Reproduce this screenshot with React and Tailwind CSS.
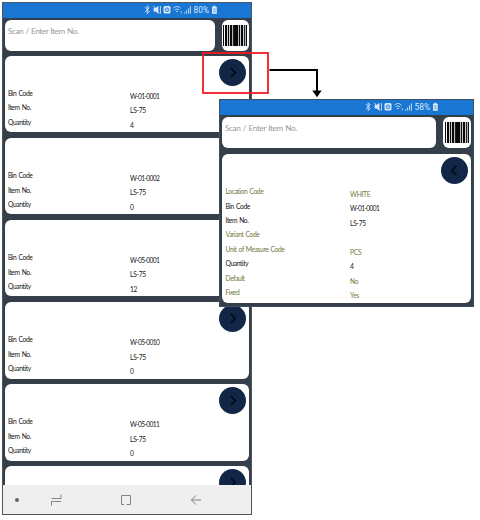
const bins = [
  ["W-01-0001", "LS-75", "4"],
  ["W-01-0002", "LS-75", "0"],
  ["W-05-0001", "LS-75", "12"],
  ["W-05-0010", "LS-75", "0"],
  ["W-05-0011", "LS-75", "0"],
];

const details = [
  ["Location Code", "WHITE", true],
  ["Bin Code", "W-01-0001", false],
  ["Item No.", "LS-75", false],
  ["Variant Code", "", true],
  ["Unit of Measure Code", "PCS", true],
  ["Quantity", "4", false],
  ["Default", "No", true],
  ["Fixed", "Yes", true],
];

function StatusIcons({ percent }) {
  return (
    <svg className="block h-[14px] w-[76px]" viewBox="0 0 76 14" fill="none" stroke="#d6e8fa" strokeWidth="0.9">
      <path d="M1 4.2 5.2 8.6 3.2 10.6V2.8L5.2 4.8 1 9.2" />
      <path d="M9.6 5h1.8l3-2v7.6l-3-2.2H9.6z" fill="#d6e8fa" stroke="none" />
      <path d="M9.6 3l5.4 7.6M16.4 3v7.6" />
      <rect x="19.5" y="3" width="7" height="7.6" rx="1.6" fill="#d6e8fa" stroke="none" />
      <circle cx="23" cy="6.8" r="1.9" stroke="#1976d2" strokeWidth="0.8" />
      <path d="M23 5.6v1.4h1" stroke="#1976d2" strokeWidth="0.6" />
      <path d="M29.3 5.2q3.7-3.4 7.4 0M30.6 7q2.4-2.2 4.8 0M32 8.7q1-.8 2 0" strokeWidth="0.8" />
      <path d="M37.2 8v2.6" strokeWidth="0.7" />
      <path d="M40.6 10.6V9.2M42.6 10.6V7.4M44.6 10.6V5.4M46.4 10.6V3.4" strokeWidth="0.9" />
      <text x="49.6" y="10.4" fill="#d6e8fa" stroke="none" textLength="15.4" lengthAdjust="spacingAndGlyphs" className="font-['Roboto',sans-serif] text-[9.4px]">
        {percent}
      </text>
      <path d="M69.3 2.8h2.2v1h1.3v7h-4.8v-7h1.3z" fill="#d6e8fa" stroke="none" />
      <path d="M69 6.2h2.8M69 8.3h2.8" stroke="#1976d2" strokeWidth="0.6" />
    </svg>
  );
}

function Barcode() {
  return (
    <svg className="block h-[21px] w-6" viewBox="0 0 24 21" fill="#080808">
      <path d="M0 0h1v21H0zM2 0h2.2v21H2zM5 0h1v21H5zM6.8 0h2.5v21H6.8zM10.1 0h5.2v21h-5.2zM16 0h1v21h-1zM17.8 0h2.4v21h-2.4zM21 0h.9v21H21zM22.7 0H24v21h-1.3z" />
    </svg>
  );
}

function RoundButton({ back = false }) {
  return (
    <div className="flex size-[27px] shrink-0 items-center justify-center rounded-full bg-[#122748]">
      <svg className="size-[13px]" viewBox="0 0 13 13" fill="none" stroke="#050a12" strokeWidth="1.8">
        {back ? <path d="M8.4 1.8 4 6.5 8.4 11.2" /> : <path d="M4.8 1.8 9.2 6.5 4.8 11.2" />}
      </svg>
    </div>
  );
}

function SearchRow({ wide = false }) {
  return (
    <div className="flex justify-between">
      <div className={`flex h-[30.5px] items-start rounded-[6px] bg-white pl-[3px] pt-[6px] ${wide ? "w-[214px]" : "w-[210px]"}`}>
        <span className={`whitespace-nowrap text-[8.2px] leading-[11px] [word-spacing:0.7px] text-[#999] ${wide ? "tracking-[-0.38px]" : "tracking-[-0.45px]"}`}>Scan / Enter Item No.</span>
      </div>
      <div className={`flex h-[30.5px] items-center justify-center rounded-[6px] bg-white ${wide ? "w-[28px]" : "w-[27.5px]"}`}>
        <Barcode />
      </div>
    </div>
  );
}

function Field({ label, value, muted = false, wide = false }) {
  return (
    <div className={`flex h-[14.45px] whitespace-nowrap text-[6.7px] leading-[14.45px] ${muted ? "text-[#74773f]" : "text-[#161616]"}`}>
      <span className={`tracking-[-0.4px] [word-spacing:0.8px] ${wide ? "w-[124.5px]" : "w-[122px]"}`}>{label}</span>
      <span className={`pt-[2.8px] ${value.length > 5 ? "text-[6.6px] tracking-[-0.6px]" : "tracking-[-0.3px]"}`}>{value}</span>
    </div>
  );
}

function CardShell({ children }) {
  return (
    <div className="h-[76.3px] shrink-0 rounded-[6px] bg-white pl-[3px] pt-[3px]">
      <div className="flex justify-end pr-[3.5px]">
        <RoundButton />
      </div>
      {children}
    </div>
  );
}

function BinCard({ bin }) {
  return (
    <CardShell>
      <Field label="Bin Code" value={bin[0]} />
      <Field label="Item No." value={bin[1]} />
      <Field label="Quantity" value={bin[2]} />
    </CardShell>
  );
}

function ListPhone() {
  return (
    <div className="ml-[2px] mt-[2px] flex h-[513px] w-[250px] flex-col border border-[#4b5661] bg-[#353f49]">
      <div className="flex h-[15px] shrink-0 justify-end bg-[#1976d2] pr-[31.5px]">
        <StatusIcons percent="80%" />
      </div>
      <div className="flex h-[467px] shrink-0 flex-col overflow-hidden px-[2px] pt-[2px]">
        <SearchRow />
        <div className="mt-[5.5px] flex flex-col gap-[5.8px]">
          {bins.map((bin) => <BinCard key={bin[0]} bin={bin} />)}
          <CardShell />
        </div>
      </div>
      <div className="flex flex-1 items-center bg-[#efefef]">
        <svg className="h-7 w-full" viewBox="0 0 248 28" fill="none" stroke="#777" strokeWidth="0.9">
          <circle cx="14" cy="14" r="2" fill="#666" stroke="none" />
          <path d="M48.5 12.5h9.5V8.5M58 15.5H48.5V19.5" />
          <path d="M121 18.5h-2.5v-9h9v9H123.5" />
          <path d="M198 14h-9.5M193 9.4 188.4 14l4.6 4.6" />
        </svg>
      </div>
    </div>
  );
}

function DetailPhone() {
  return (
    <div className="absolute left-[219px] top-[99px] h-[208px] w-[255px] border border-[#3f4e60] bg-[#353f49]">
      <div className="flex h-[15px] justify-end bg-[#1976d2] pr-[32px]">
        <StatusIcons percent="58%" />
      </div>
      <div className="px-[2px] pt-[2px]">
        <SearchRow wide />
        <div className="mt-[6px] h-[149px] rounded-[6px] bg-white pl-[3.5px] pt-[3px]">
          <div className="mb-[0.6px] flex justify-end pr-[3.5px]">
            <RoundButton back />
          </div>
          {details.map(([label, value, muted]) => (
            <Field key={label} label={label} value={value} muted={muted} wide />
          ))}
        </div>
      </div>
    </div>
  );
}

export default function App() {
  return (
    <div className="relative flow-root h-[520px] w-[480px] overflow-hidden bg-white font-['Lato',sans-serif]">
      <ListPhone />
      <DetailPhone />
      <svg className="absolute left-0 top-0 h-[110px] w-[340px]" viewBox="0 0 340 110" fill="none">
        <rect x="203" y="53" width="65" height="40" stroke="#f21b24" strokeWidth="1.8" />
        <path d="M269.5 70H317v21" stroke="#000" strokeWidth="2" />
        <path d="M312.3 90.5h9.4L317 97.3z" fill="#000" />
      </svg>
    </div>
  );
}
